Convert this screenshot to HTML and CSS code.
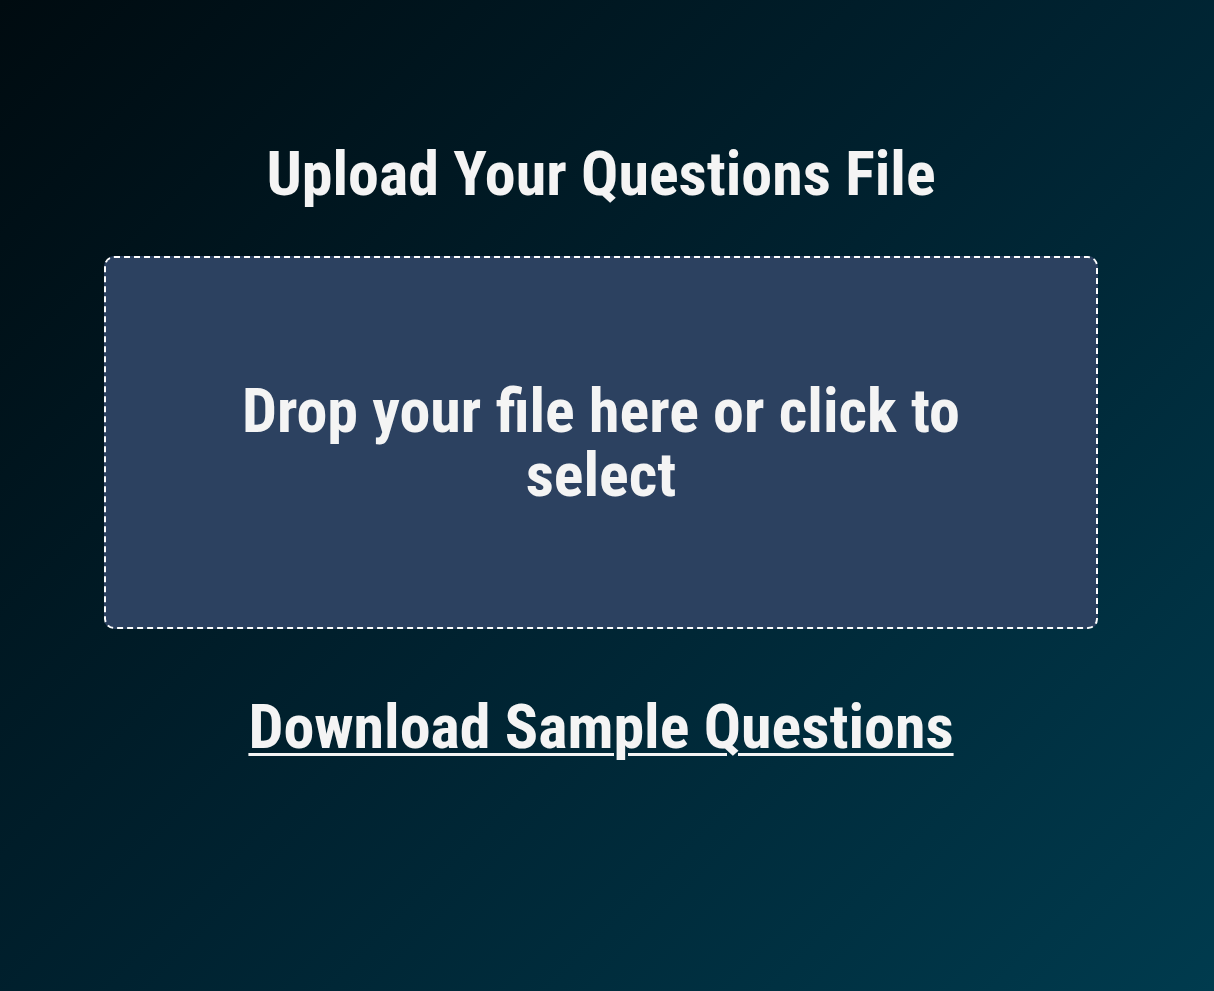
FILE: index.html
```html
<!DOCTYPE html>
<html lang="en">
<head>
<meta charset="utf-8">
<title>Upload Questions</title>
<link rel="stylesheet" href="styles.css">
</head>
<body>
<main class="page">
  <h1 class="title">Upload Your Questions File</h1>
  <div class="dropzone">
    <p class="drop-text">Drop your file here or click to select</p>
  </div>
  <a class="sample-link" href="#">Download Sample Questions</a>
</main>
</body>
</html>
```

FILE: styles.css
```css
html, body {
  margin: 0;
  padding: 0;
  height: 100%;
}
body {
  background: linear-gradient(135deg, #000b10 0%, #002230 50%, #003b4e 100%);
  font-family: "Roboto Condensed", Roboto, "Liberation Sans", sans-serif;
  font-stretch: condensed;
  font-weight: 700;
  color: #f4f4f4;
}
.page {
  display: flex;
  flex-direction: column;
  align-items: center;
  padding: 142px 116px 0 104px;
}
.title {
  margin: 0;
  font-size: 62px;
  line-height: 64px;
  font-weight: 700;
}
.dropzone {
  box-sizing: border-box;
  margin-top: 50px;
  width: 100%;
  height: 373px;
  border: 2px dashed #ffffff;
  border-radius: 10px;
  background: #2c4160;
  display: flex;
  align-items: center;
  justify-content: center;
  padding: 0 120px;
}
.drop-text {
  margin: 0;
  text-align: center;
  font-size: 62px;
  line-height: 64px;
}
.sample-link {
  margin-top: 66px;
  color: #f4f4f4;
  font-size: 62px;
  line-height: 64px;
  text-decoration: underline;
  text-decoration-thickness: 3px;
  text-underline-offset: 5px;
}
```
